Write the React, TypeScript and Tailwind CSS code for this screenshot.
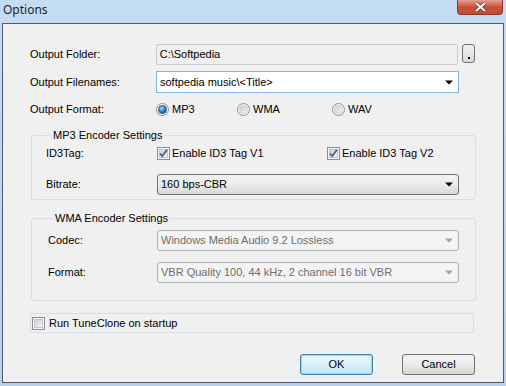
import React from "react";

function Arrow({ disabled = false }: { disabled?: boolean }) {
  return (
    <svg width="8" height="5" viewBox="0 0 8 5" className="shrink-0">
      <path d="M0 0.5h8L4 4.5z" fill={disabled ? "#a3a3a3" : "#000"} />
    </svg>
  );
}

function Checkbox({ checked = false }: { checked?: boolean }) {
  return (
    <svg width="13" height="13" viewBox="0 0 13 13" className="shrink-0">
      <defs>
        <linearGradient id="cbg" x1="0" y1="0" x2="1" y2="1">
          <stop offset="0" stopColor="#cbcfd5" />
          <stop offset="1" stopColor="#f6f6f6" />
        </linearGradient>
      </defs>
      <rect x="0.5" y="0.5" width="12" height="12" fill="#f4f4f4" stroke="#8f8f8f" />
      <rect x="2.5" y="2.5" width="8" height="8" fill="url(#cbg)" stroke="#c3c6cb" />
      {checked && (
        <path d="M3 6.5l2.2 2.6L10 2.8" fill="none" stroke="#4a5f97" strokeWidth="1.8" />
      )}
    </svg>
  );
}

function Radio({ checked = false }: { checked?: boolean }) {
  return (
    <svg width="13" height="13" viewBox="0 0 13 13" className="shrink-0">
      <defs>
        <radialGradient id="rdot" cx="0.4" cy="0.35" r="0.7">
          <stop offset="0" stopColor="#a8dcf7" />
          <stop offset="0.6" stopColor="#2a7dc2" />
          <stop offset="1" stopColor="#1c4f86" />
        </radialGradient>
        <linearGradient id="rbg" x1="0" y1="0" x2="1" y2="1">
          <stop offset="0" stopColor="#c6c9ce" />
          <stop offset="1" stopColor="#f8f8f8" />
        </linearGradient>
      </defs>
      <circle cx="6.5" cy="6.5" r="6" fill="#f4f4f4" stroke="#8f8f8f" />
      <circle cx="6.5" cy="6.5" r="4" fill={checked ? "url(#rdot)" : "url(#rbg)"} stroke={checked ? "#1f4f7e" : "#c6c9ce"} strokeWidth="0.8" />
    </svg>
  );
}

export default function App() {
  return (
    <div className="w-[506px] h-[386px] bg-gradient-to-b from-[#c4dcf3] to-[#b9d2ec] flex flex-col font-['Liberation_Sans',Arial,sans-serif] text-[11px] text-black overflow-hidden">
      <div className="h-[23px] flex items-start justify-between">
        <span className="pl-[3px] pt-[1px] text-[12px] text-[#1e1e1e] font-['Noto_Sans',sans-serif]">Options</span>
        <div className="mr-[3px] w-[46px] h-[15px] rounded-b-[4px] border border-t-0 border-[#8a3a2f] bg-gradient-to-b from-[#e2a090] via-[#c8503a] to-[#c44a35] flex items-center justify-center">
          <svg width="13" height="10" viewBox="0 0 13 10">
            <path d="M2 1l9 8M11 1l-9 8" stroke="#5a2a24" strokeWidth="3.4" />
            <path d="M2 1l9 8M11 1l-9 8" stroke="#fff" strokeWidth="2.2" />
          </svg>
        </div>
      </div>

      <div className="mx-[2px] h-[360px] border border-[#4f5b68] bg-[#f0f0f0] pl-[27px] pr-[28px] pt-[20px] flex flex-col">
        <div className="flex items-center h-[21px]">
          <span className="w-[126px]">Output Folder:</span>
          <div className="w-[303px] h-[21px] border border-[#c9ccd0] rounded-[2px] bg-[#f0f0f0] flex items-center px-[3px]">C:\Softpedia</div>
          <div className="ml-[4px] w-[13px] h-[19px] self-start border border-[#707070] rounded-[3px] bg-gradient-to-b from-[#f2f2f2] to-[#d8d8d8] flex items-end justify-center pb-[3px]">
            <span className="w-[2px] h-[2px] bg-black" />
          </div>
        </div>

        <div className="flex items-center h-[22px] mt-[6px]">
          <span className="w-[126px]">Output Filenames:</span>
          <div className="w-[303px] h-[22px] border border-[#7eb4ea] bg-white flex items-center justify-between pl-[3px] pr-[5px]">
            <span>softpedia music\&lt;Title&gt;</span>
            <Arrow />
          </div>
        </div>

        <div className="flex items-center h-[16px] mt-[8px]">
          <span className="w-[126px]">Output Format:</span>
          <div className="w-[81px] flex items-center gap-[3px]">
            <Radio checked />
            <span>MP3</span>
          </div>
          <div className="w-[95px] flex items-center gap-[3px]">
            <Radio />
            <span>WMA</span>
          </div>
          <div className="flex items-center gap-[3px]">
            <Radio />
            <span>WAV</span>
          </div>
        </div>

        <fieldset className="ml-[1px] mt-[10px] w-[445px] h-[73px] border border-[#d5dfe5] rounded-[3px] pl-[14px]">
          <legend className="ml-[5px] px-[2px]">MP3 Encoder Settings</legend>
          <div className="flex items-center h-[14px] mt-[3px]">
            <span className="w-[111px]">ID3Tag:</span>
            <div className="w-[170px] flex items-center gap-[2px]">
              <Checkbox checked />
              <span>Enable ID3 Tag V1</span>
            </div>
            <div className="flex items-center gap-[2px]">
              <Checkbox checked />
              <span>Enable ID3 Tag V2</span>
            </div>
          </div>
          <div className="flex items-center h-[21px] mt-[13px]">
            <span className="w-[111px]">Bitrate:</span>
            <div className="w-[302px] h-[21px] border border-[#707070] rounded-[3px] bg-gradient-to-b from-[#f2f2f2] via-[#ebebeb] to-[#d9d9d9] flex items-center justify-between pl-[3px] pr-[5px]">
              <span>160 bps-CBR</span>
              <Arrow />
            </div>
          </div>
        </fieldset>

        <fieldset className="ml-[1px] mt-[10px] w-[445px] h-[91px] border border-[#d5dfe5] rounded-[3px] pl-[16px]">
          <legend className="ml-[5px] px-[2px]">WMA Encoder Settings</legend>
          <div className="flex items-center h-[21px] mt-[3px]">
            <span className="w-[109px]">Codec:</span>
            <div className="w-[302px] h-[21px] border border-[#adb2b5] rounded-[3px] bg-[#f4f4f4] text-[#6d6d6d] flex items-center justify-between pl-[3px] pr-[5px]">
              <span>Windows Media Audio 9.2 Lossless</span>
              <Arrow disabled />
            </div>
          </div>
          <div className="flex items-center h-[21px] mt-[11px]">
            <span className="w-[109px]">Format:</span>
            <div className="w-[302px] h-[21px] border border-[#adb2b5] rounded-[3px] bg-[#f4f4f4] text-[#6d6d6d] flex items-center justify-between pl-[3px] pr-[5px]">
              <span>VBR Quality 100, 44 kHz, 2 channel 16 bit VBR</span>
              <Arrow disabled />
            </div>
          </div>
        </fieldset>

        <div className="mt-[12px] w-[444px] h-[20px] border border-[#d5dfe5] flex items-center gap-[4px] pl-[1px]">
          <Checkbox />
          <span>Run TuneClone on startup</span>
        </div>

        <div className="mt-[21px] flex justify-end gap-[29px]">
          <button className="w-[73px] h-[21px] border border-[#3c7fb1] rounded-[3px] bg-gradient-to-b from-[#eaf6fd] via-[#d9f0fc] to-[#bee6fd] shadow-[inset_0_0_0_1px_#9ed4f5]">OK</button>
          <button className="w-[73px] h-[21px] border border-[#707070] rounded-[3px] bg-gradient-to-b from-[#f2f2f2] via-[#ebebeb] to-[#d6d6d6]">Cancel</button>
        </div>
      </div>
    </div>
  );
}
